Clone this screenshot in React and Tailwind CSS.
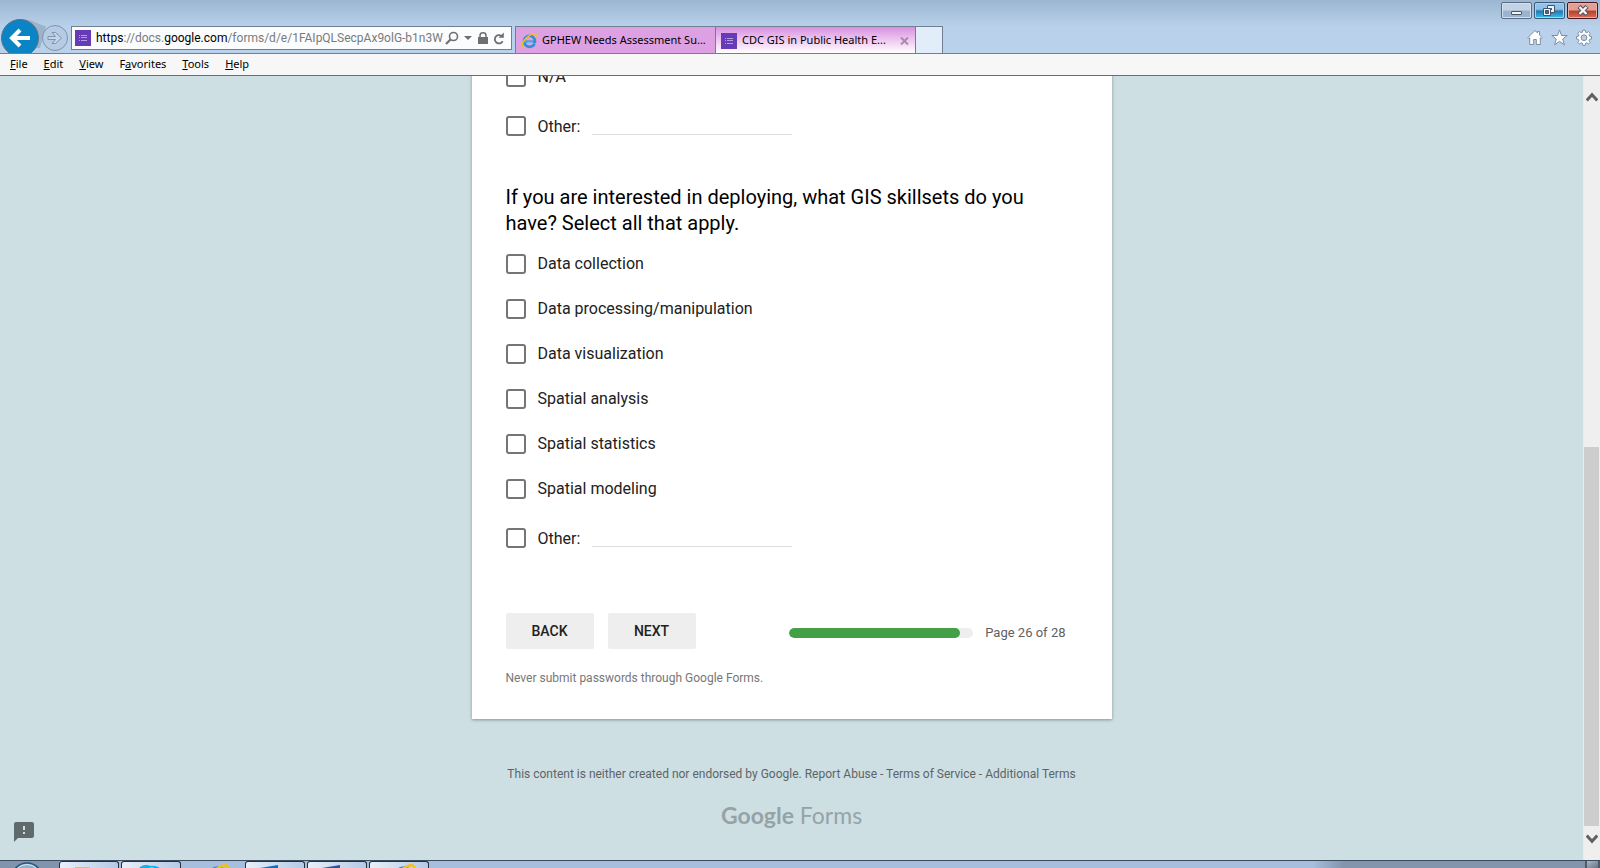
import React, { useState } from 'react';
import { MdFeedback } from 'react-icons/md';

const skills = [
  'Data collection',
  'Data processing/manipulation',
  'Data visualization',
  'Spatial analysis',
  'Spatial statistics',
  'Spatial modeling',
];

// before / underlined access key / after
const menus = [
  ['', 'F', 'ile'],
  ['', 'E', 'dit'],
  ['', 'V', 'iew'],
  ['F', 'a', 'vorites'],
  ['', 'T', 'ools'],
  ['', 'H', 'elp'],
];

const FormsIcon = () => (
  <svg width="16" height="16" viewBox="0 0 16 16" className="shrink-0">
    <path fill="#673ab7" d="M0 0h16v16H0z" />
    <path fill="#b39ddb" d="M4 5h1v1H4zM6 5h6v1H6zM4 7h1v1H4zM6 7h6v1H6zM4 10h1v1H4zM6 10h6v1H6z" />
  </svg>
);

const IeIcon = ({ size = 16 }) => (
  <svg width={size} height={size} viewBox="0 0 16 16" className="shrink-0">
    <path d="M13.6 10.4A5.5 5.5 0 1 1 14 8.7H5" fill="none" stroke="#2f8fd6" strokeWidth="2.6" />
    <path d="M12 9.2H5.6" stroke="#8fd0f5" strokeWidth="1" />
    <path d="M2.4 15C.2 14.4.6 11 3.4 7.2 6.8 2.8 12.6-.6 14.6 1.4c.8.8.6 2-.1 3.4" fill="none" stroke="#f3c01c" strokeWidth="1.5" />
  </svg>
);

const WindowButtons = () => (
  <div className="flex gap-[2px] pr-[2px] pt-[2px]">
    <button aria-label="Minimize" className="flex h-[17px] w-[31px] items-center justify-center rounded-[2px] border border-[#5d6b80] bg-linear-to-b from-[#c3d3e5] from-45% to-[#9cb3cf] to-55% shadow-[inset_0_0_0_1px_#d3e0ee]">
      <svg width="12" height="13" viewBox="0 0 12 13">
        <rect x="0.5" y="7.5" width="10" height="3" rx="0.5" fill="#f4f4f4" stroke="#4a5468" />
      </svg>
    </button>
    <button aria-label="Restore" className="flex h-[17px] w-[31px] items-center justify-center rounded-[2px] border border-[#3d5878] bg-linear-to-b from-[#8fc3ea] from-40% via-[#2a76b0] via-55% to-[#31c6ee] shadow-[inset_0_0_0_1px_#9fd6f2]">
      <svg width="13" height="12" viewBox="0 0 13 12">
        <path d="M4.500.5h7v7h-7z" fill="#f0f4f8" stroke="#44536a" />
        <path d="M7 3h2v2H7z" fill="#2a6ca5" />
        <path d="M.5 3.500h7v7h-7z" fill="#f0f4f8" stroke="#44536a" />
        <path d="M2.500 5.500h3v3h-3z" fill="#2a76b0" stroke="#44536a" />
      </svg>
    </button>
    <button aria-label="Close" className="flex h-[17px] w-[31px] items-center justify-center rounded-[2px] border border-[#4b1422] bg-linear-to-b from-[#e0a095] from-45% via-[#b8402a] via-55% to-[#d4705a] shadow-[inset_0_0_0_1px_#e8b0a6]">
      <svg width="12" height="11" viewBox="0 0 12 11">
        <path d="M2 1.500l8 8M10 1.500l-8 8" stroke="#54505c" strokeWidth="4.4" />
        <path d="M2.500 2l7 7M9.500 2l-7 7" stroke="#f6f6f6" strokeWidth="2.4" />
      </svg>
    </button>
  </div>
);

const BrowserIcons = () => (
  <div className="flex gap-2 pb-[7px] pr-2">
    <button aria-label="Home">
      <svg width="16" height="17" viewBox="0 0 16 17">
        <path d="M8 1.500L.8 8.600l1 1 .9-.8V15.500h4V10.500h2.600v5h4V8.800l.9.8 1-1L12.500 5.900V2.500h-2v1.400z" fill="#fff" stroke="#7c8da3" />
      </svg>
    </button>
    <button aria-label="View favorites">
      <svg width="17" height="17" viewBox="0 0 17 17">
        <path d="M8.500.9l2 5.600h5.700l-4.500 3.500 1.700 5.800-4.900-3.500-4.900 3.500 1.700-5.800L.8 6.500h5.700z" fill="#fff" stroke="#7c8da3" />
      </svg>
    </button>
    <button aria-label="Tools">
      <svg width="16" height="17" viewBox="0 0 24 24">
        <path
          d="M10.200 1h3.600l.6 3 1.900.8L18.900 3l2.500 2.500-1.800 2.600.8 1.900 3 .6v3.600l-3 .6-.8 1.900 1.800 2.600-2.500 2.500-2.600-1.800-1.900.8-.6 3h-3.600l-.6-3-1.900-.8-2.600 1.800-2.500-2.500 1.800-2.600-.8-1.900-3-.6v-3.600l3-.6.8-1.900L2.600 5.500 5.100 3l2.600 1.800 1.900-.8zM12 8a4.300 4.300 0 1 0 0 8.600A4.300 4.300 0 0 0 12 8z"
          fill="#fff"
          stroke="#7c8da3"
          strokeWidth="1.5"
        />
      </svg>
    </button>
  </div>
);

const AddressBar = () => (
  <div className="mb-[3px] ml-[3px] flex h-6 w-[441px] items-center border border-[#717f93] bg-[#fafcfe] pl-[3px] pr-[6px]">
    <FormsIcon />
    <a href="#form" className="ml-[5px] w-[345px] whitespace-nowrap font-['Roboto',sans-serif] text-[12px] text-[#7b7b7b]">
      <span className="text-black">https</span>://docs.<span className="text-black">google.com</span>
      /forms/d/e/1FAIpQLSecpAx9olG-b1n3W
    </a>
    <div className="flex flex-1 items-center justify-between pl-[4px] text-[#6f6f6f]">
      <button aria-label="Search">
        <svg width="14" height="14" viewBox="0 0 14 14" fill="none" stroke="currentColor">
          <circle cx="8.500" cy="5.500" r="4" strokeWidth="1.600" />
          <path d="M5.500 8.500L1 13" strokeWidth="2.200" />
        </svg>
      </button>
      <button aria-label="Show address list">
        <svg width="8" height="4" viewBox="0 0 8 4">
          <path d="M0 0h8L4 4z" fill="currentColor" />
        </svg>
      </button>
      <button aria-label="Security report">
        <svg width="10" height="12" viewBox="0 0 10 12">
          <path d="M0 5h10v7H0z" fill="currentColor" />
          <path d="M2 6V3.500a3 2.700 0 0 1 6 0V6" fill="none" stroke="currentColor" strokeWidth="1.500" />
        </svg>
      </button>
      <button aria-label="Refresh">
        <svg width="12" height="13" viewBox="0 0 12 13">
          <path d="M9.700 9.300A4.200 4.200 0 1 1 8.300 3.700" fill="none" stroke="currentColor" strokeWidth="1.800" />
          <path d="M10.800.5v5.300H5.500z" fill="currentColor" />
        </svg>
      </button>
    </div>
  </div>
);

const Tabs = () => (
  <div className="ml-[3px] flex h-[27px] border-x border-t border-[#717f93] text-[11px] text-black">
    <button className="flex w-[200px] items-center gap-[5px] whitespace-nowrap border-r border-[#717f93] bg-[#dda0e3] pl-[5px] pt-px">
      <IeIcon />
      GPHEW Needs Assessment Su...
    </button>
    <div className="flex w-[200px] items-center border-r border-[#717f93] bg-linear-to-b from-[#d98fe0] to-white pl-[5px] pr-[6px] pt-px">
      <button className="flex flex-1 items-center gap-[5px] whitespace-nowrap">
        <FormsIcon />
        CDC GIS in Public Health E...
      </button>
      <button aria-label="Close tab">
        <svg width="9" height="8" viewBox="0 0 9 8">
          <path d="M1 .5l7 7M8 .5l-7 7" stroke="#a58baa" strokeWidth="2" />
        </svg>
      </button>
    </div>
    <button aria-label="New tab" className="w-[26px] bg-[#e1edf9]" />
  </div>
);

const BrowserHeader = () => (
  <header className="shrink-0 font-['Noto_Sans',sans-serif]">
    <div className="flex h-[54px] justify-between overflow-hidden border-b border-[#717f93] bg-linear-to-b from-[#9bb6d1] to-[#b9d1ea] to-50%">
      <div className="flex items-end">
        <svg width="68" height="35" viewBox="0 0 68 35" role="img" aria-label="Back and forward" className="shrink-0">
          <path d="M20 1C34 1 38 7 46 8l-6 22H20z" fill="#9db3cb" />
          <circle cx="20" cy="20" r="18.500" fill="#0a84c4" stroke="#5d7186" />
          <path d="M30 20H13M20 12l-8 8 8 8" fill="none" stroke="#fff" strokeWidth="4" />
          <circle cx="55" cy="20" r="12.500" fill="#b5cce4" stroke="#8094ab" />
          <path d="M48 18.500h7.500l-3.500-4h3.500l6 5.500-6 5.500H52l3.500-4H48z" fill="#c3d6ea" stroke="#8094ab" />
        </svg>
        <AddressBar />
        <Tabs />
      </div>
      <div className="flex flex-col items-end justify-between">
        <WindowButtons />
        <BrowserIcons />
      </div>
    </div>
    <nav className="flex h-[22px] items-center gap-4 border-b border-[#6e6e6e] bg-[#f7f7f7] pl-[10px] text-[11px] text-black">
      {menus.map(([before, key, after]) => (
        <button key={after}>
          {before}
          <span className="underline">{key}</span>
          {after}
        </button>
      ))}
    </nav>
  </header>
);

const boxClass = 'size-5 shrink-0 appearance-none rounded-[3px] border-2 border-[#757575] bg-white checked:bg-[#673ab7]';

const Option = ({ label }) => (
  <label className="flex h-[45px] items-center gap-3">
    <input type="checkbox" className={boxClass} />
    <span className="pt-px">{label}</span>
  </label>
);

const OtherOption = ({ id }) => {
  const [text, setText] = useState('');

  return (
    <div className="flex h-[54px] items-center">
      <label className="flex items-center gap-3">
        <input type="checkbox" className={boxClass} checked={text !== ''} onChange={() => setText('')} />
        <span className="pt-px">Other:</span>
      </label>
      <input
        id={id}
        type="text"
        aria-label="Other response"
        className="ml-3 h-[18px] w-[200px] border-b border-[#dedede] outline-none"
        value={text}
        onChange={(e) => setText(e.target.value)}
      />
    </div>
  );
};

const ScrollBar = () => (
  <div className="flex w-[17px] shrink-0 flex-col border-l border-[#e6eded] bg-[#efefef] pr-px">
    <button aria-label="Scroll up" className="flex h-[34px] shrink-0 items-end justify-center pb-2">
      <svg width="12" height="10" viewBox="0 0 12 10">
        <path d="M.7 8.500L6 2.800l5.300 5.700" fill="none" stroke="#606060" strokeWidth="3" />
      </svg>
    </button>
    <div className="flex flex-1 flex-col justify-end">
      <div className="h-[53%] bg-[#cdcdcd]" />
    </div>
    <button aria-label="Scroll down" className="flex h-[34px] shrink-0 items-start justify-center pt-2">
      <svg width="12" height="10" viewBox="0 0 12 10">
        <path d="M.7 1.500L6 7.200l5.300-5.700" fill="none" stroke="#606060" strokeWidth="3" />
      </svg>
    </button>
  </div>
);

const TaskButton = ({ children }) => (
  <button className="flex h-full w-[60px] items-start justify-center overflow-hidden rounded-t-[3px] border-x border-t border-[#26303d] bg-linear-to-r from-[#e9eff7] to-[#b4cae6]">
    {children}
  </button>
);

const Taskbar = () => (
  <footer className="flex h-2 shrink-0 overflow-hidden border-t border-[#3d4b5e] bg-linear-to-r from-[#a6bfde] from-82% to-[#8395ad] to-84%">
    <button aria-label="Start" className="flex w-[59px] items-start justify-center bg-[#8094ae] pr-[5px] pt-px">
      <svg width="32" height="32" viewBox="0 0 32 32" className="shrink-0">
        <circle cx="16" cy="16" r="15" fill="#8fb0c6" stroke="#245a80" strokeWidth="1.500" />
        <circle cx="16" cy="16" r="13.500" fill="none" stroke="#d5e6f0" />
      </svg>
    </button>
    <div className="flex gap-[2px]">
      <TaskButton>
        <svg width="30" height="24" viewBox="0 0 30 24" className="shrink-0">
          <path d="M1 5h15v17H1z" fill="#d3bf80" />
        </svg>
      </TaskButton>
      <TaskButton>
        <svg width="30" height="24" viewBox="0 0 30 24" className="shrink-0">
          <path d="M2 12C1 2 11 2 14 4c5-1 9 1 12 4v16H2z" fill="#0cb2ee" />
          <path d="M7 10q5-6 12-4l4 4v14H7z" fill="#d5e1f0" />
        </svg>
      </TaskButton>
      <div className="flex w-[60px] items-start justify-center pl-2 pt-[3px]">
        <IeIcon size={26} />
      </div>
      <TaskButton>
        <svg width="30" height="24" viewBox="0 0 30 24" className="shrink-0">
          <path d="M0 6l18-3v21H0z" fill="#0b70c4" />
        </svg>
      </TaskButton>
      <TaskButton>
        <svg width="30" height="24" viewBox="0 0 30 24" className="shrink-0">
          <path d="M0 6l18-3v21H0z" fill="#2b5499" />
        </svg>
      </TaskButton>
      <TaskButton>
        <div className="pl-2 pt-[2px]">
          <IeIcon size={26} />
        </div>
      </TaskButton>
    </div>
    <button aria-label="Show desktop" className="ml-auto w-[15px] border-x-2 border-[#4e5a6c] bg-linear-to-br from-[#aeb9c6] to-[#67758a]" />
  </footer>
);

const App = () => {
  const page = 26;
  const pages = 28;

  return (
    <div className="flex h-screen flex-col overflow-hidden font-['Roboto',sans-serif]">
      <BrowserHeader />

      <div className="relative flex min-h-0 flex-1 bg-[#cedfe3]">
        <main className="flex-1 overflow-hidden">
          <form
            id="form"
            className="mx-auto max-w-[640px] bg-white px-[34px] pb-8 text-[16px] text-[#212121] shadow-[0_1px_3px_rgba(0,0,0,0.35)]"
            onSubmit={(e) => e.preventDefault()}
          >
            <div className="-mt-[22px]">
              <Option label="N/A" />
              <OtherOption id="other-deploy" />
            </div>

            <fieldset className="mt-[31px]">
              <legend className="pb-[5px] text-[20px] leading-[26px] text-black">
                If you are interested in deploying, what GIS skillsets do you have? Select all that apply.
              </legend>
              {skills.map((skill) => (
                <Option key={skill} label={skill} />
              ))}
              <OtherOption id="other-skill" />
            </fieldset>

            <div className="mt-12 flex items-center gap-[14px] text-[14px] font-medium">
              <button type="button" className="h-9 w-[88px] rounded-[2px] bg-[#eeeeee]">BACK</button>
              <button type="submit" className="h-9 w-[88px] rounded-[2px] bg-[#eeeeee]">NEXT</button>
              <div className="ml-auto flex items-center gap-3 pr-3 pt-1 text-[13px] font-normal text-[#616161]">
                <div className="h-[10px] w-[184px] overflow-hidden rounded-full bg-[#eeeeee]">
                  <div className="h-full rounded-full bg-[#43a047]" style={{ width: `${(page / pages) * 100}%` }} />
                </div>
                Page {page} of {pages}
              </div>
            </div>
            <p className="mt-5 text-[12px] leading-[18px] text-[#777777]">Never submit passwords through Google Forms.</p>
          </form>

          <div className="mt-[46px] text-center text-[12px] leading-[18px] text-[#5c6466]">
            This content is neither created nor endorsed by Google. <a href="#abuse">Report Abuse</a> -{' '}
            <a href="#terms">Terms of Service</a> - <a href="#additional">Additional Terms</a>
          </div>
          <div className="mt-4 text-center font-['Lato',sans-serif] text-[23px] leading-8 text-[#95a3a7]">
            <a href="#forms">
              <span className="font-bold">Google</span> Forms
            </a>
          </div>
        </main>

        <button aria-label="Report a problem" className="absolute bottom-4 left-3 text-[24px] text-[#606a6c]">
          <MdFeedback />
        </button>
        <ScrollBar />
      </div>

      <Taskbar />
    </div>
  );
};

export default App;
